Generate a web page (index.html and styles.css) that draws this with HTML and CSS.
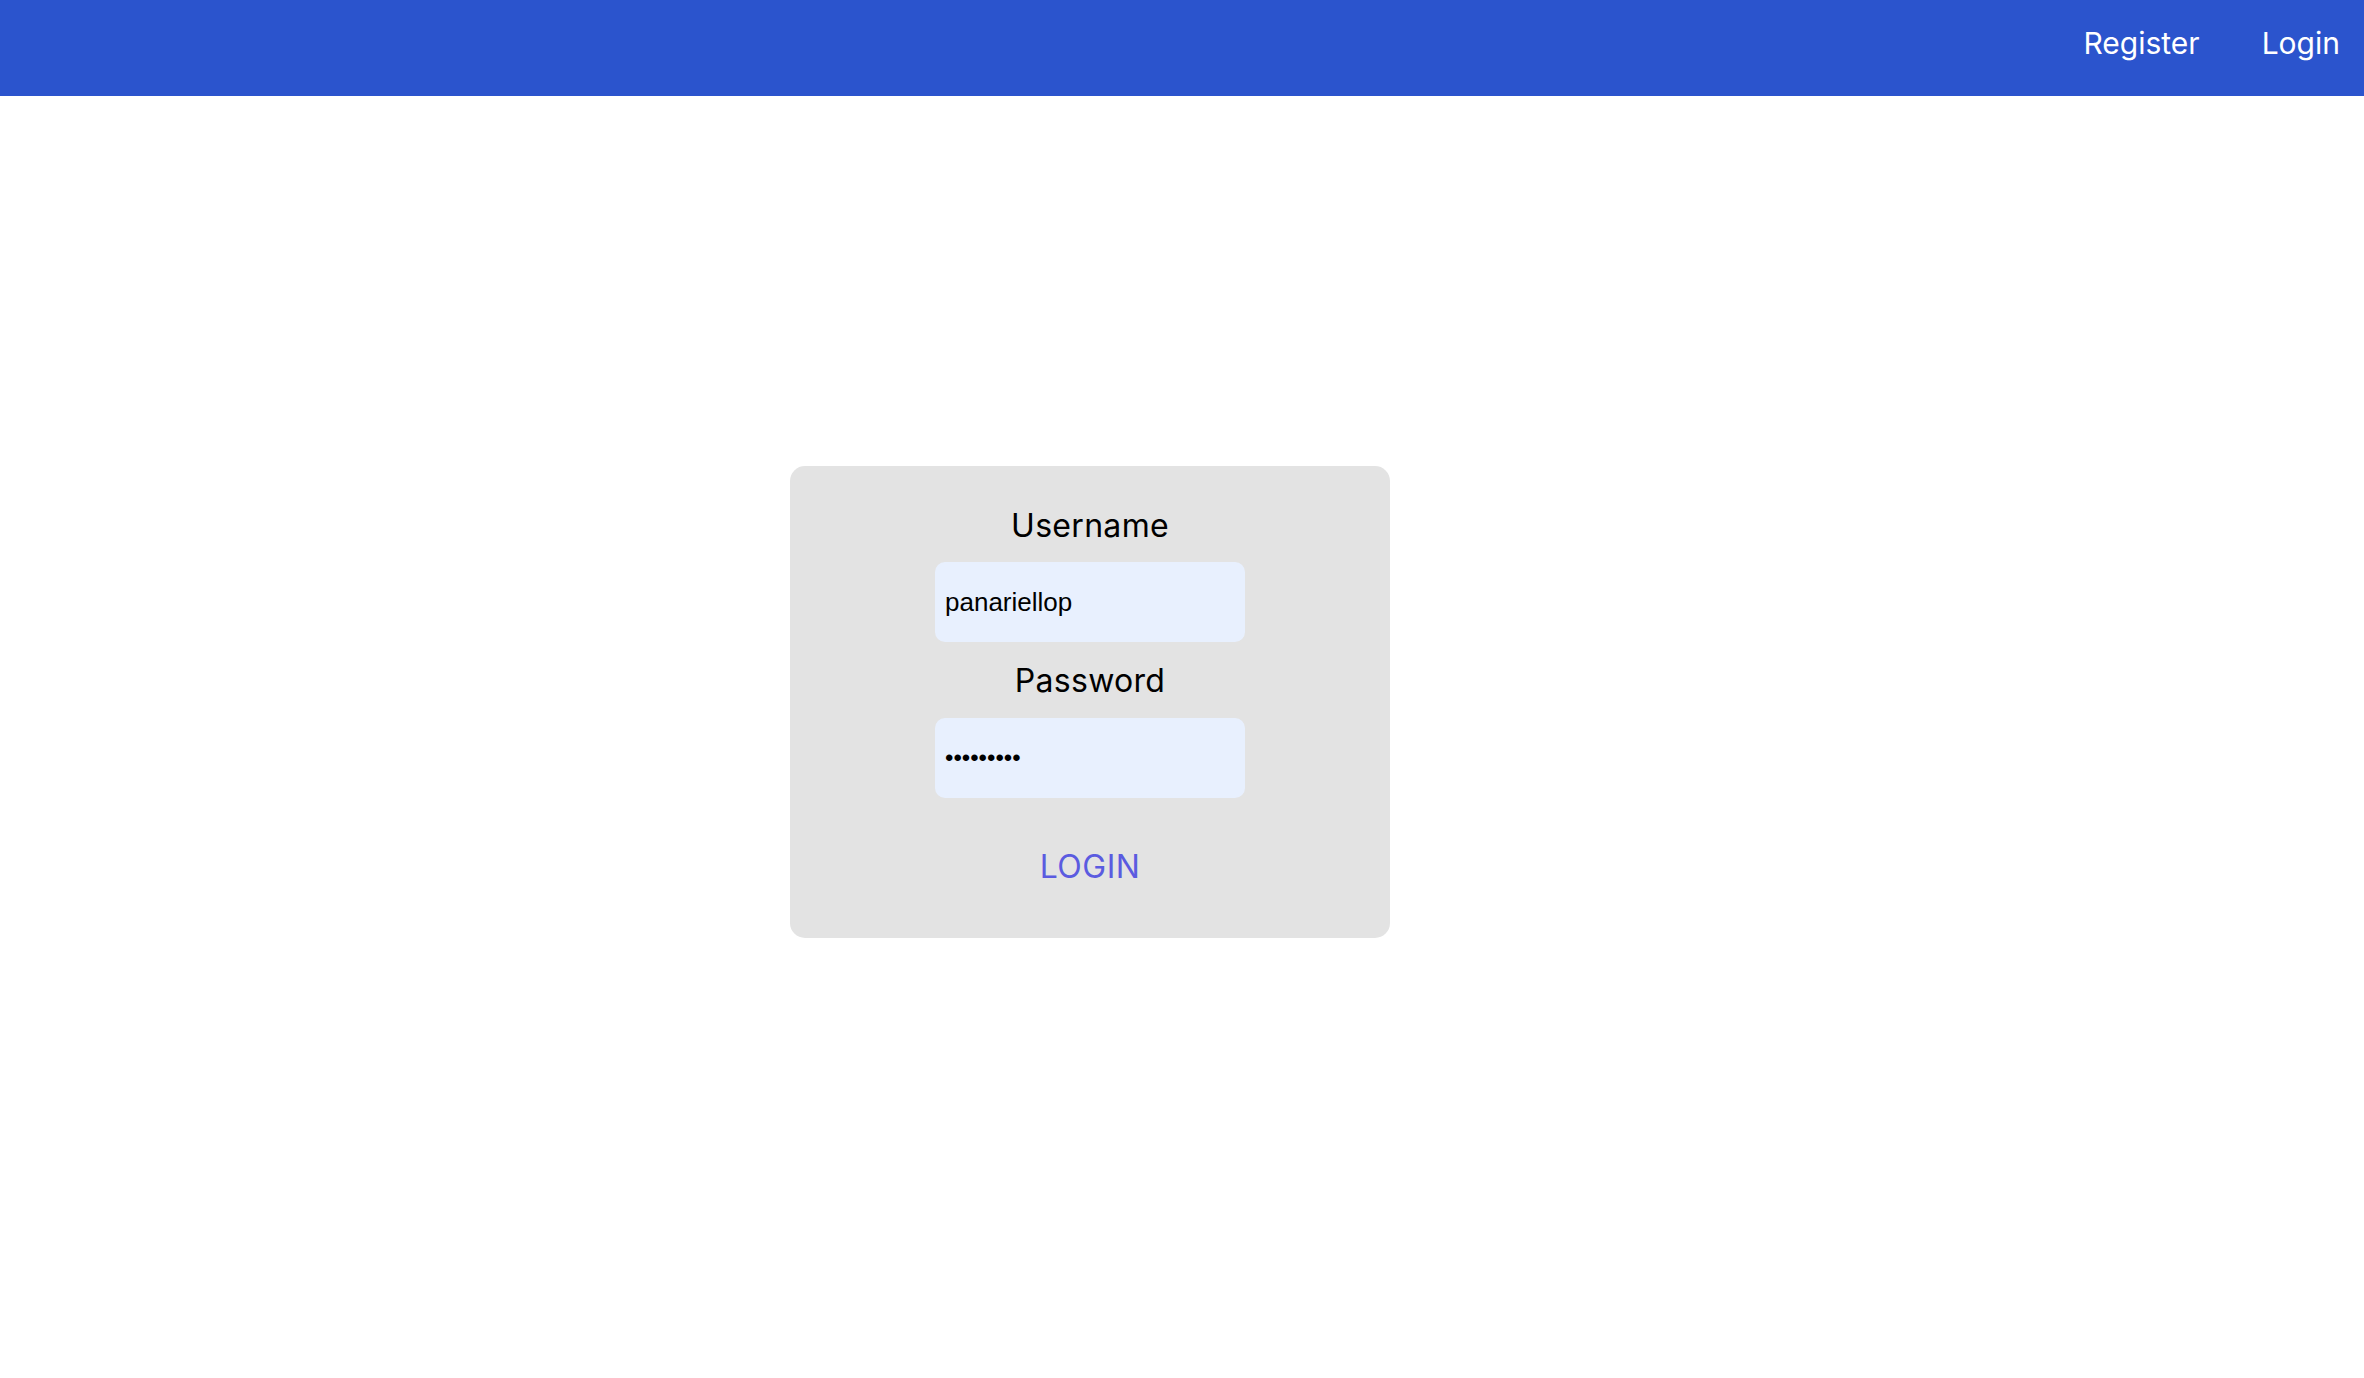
FILE: index.html
```html
<!DOCTYPE html>
<html lang="en">
<head>
<meta charset="utf-8">
<title>Login</title>
<link rel="stylesheet" href="styles.css">
</head>
<body>
<header class="topbar">
  <nav class="nav">
    <a class="nav-link" href="#">Register</a>
    <a class="nav-link" href="#">Login</a>
  </nav>
</header>
<main class="page">
  <form class="card">
    <label class="label" for="user">Username</label>
    <input class="field" id="user" type="text" value="panariellop">
    <label class="label label-pass" for="pass">Password</label>
    <input class="field field-pass" id="pass" type="password" value="password1">
    <button class="login-btn" type="button">LOGIN</button>
  </form>
</main>
</body>
</html>
```

FILE: styles.css
```css
html, body {
  margin: 0;
  padding: 0;
  background: #ffffff;
  font-family: Inter, "Noto Sans", sans-serif;
}

.topbar {
  height: 96px;
  background: #2b54cd;
  display: flex;
  justify-content: flex-end;
  align-items: flex-start;
}

.nav {
  display: flex;
  gap: 62px;
  padding-right: 24px;
  padding-top: 24px;
}

.nav-link {
  color: #ffffff;
  text-decoration: none;
  font-size: 30px;
  line-height: 38px;
}

.page {
  display: grid;
  grid-template-columns: 790px 600px 1fr;
  padding-top: 370px;
}

.card {
  grid-column: 2;
  height: 472px;
  box-sizing: border-box;
  background: #e3e3e3;
  border-radius: 15px;
  display: flex;
  flex-direction: column;
  align-items: center;
  padding-top: 40px;
}

.label {
  font-size: 32px;
  line-height: 39px;
  color: #000000;
  letter-spacing: 0.3px;
}

.field {
  margin-top: 17px;
  width: 310px;
  height: 80px;
  box-sizing: border-box;
  border: none;
  outline: none;
  border-radius: 10px;
  background: #e8f0fe;
  padding: 0 10px;
  font-family: "Liberation Sans", Arial, sans-serif;
  font-size: 26px;
  color: #000000;
}

.label-pass {
  margin-top: 19px;
}

.field-pass {
  margin-top: 18px;
  font-size: 24px;
}

.login-btn {
  margin-top: 49px;
  border: none;
  background: none;
  padding: 0;
  font-family: Inter, "Noto Sans", sans-serif;
  font-size: 32px;
  line-height: 39px;
  color: #5b5be0;
  letter-spacing: 0.5px;
  cursor: pointer;
}
```
